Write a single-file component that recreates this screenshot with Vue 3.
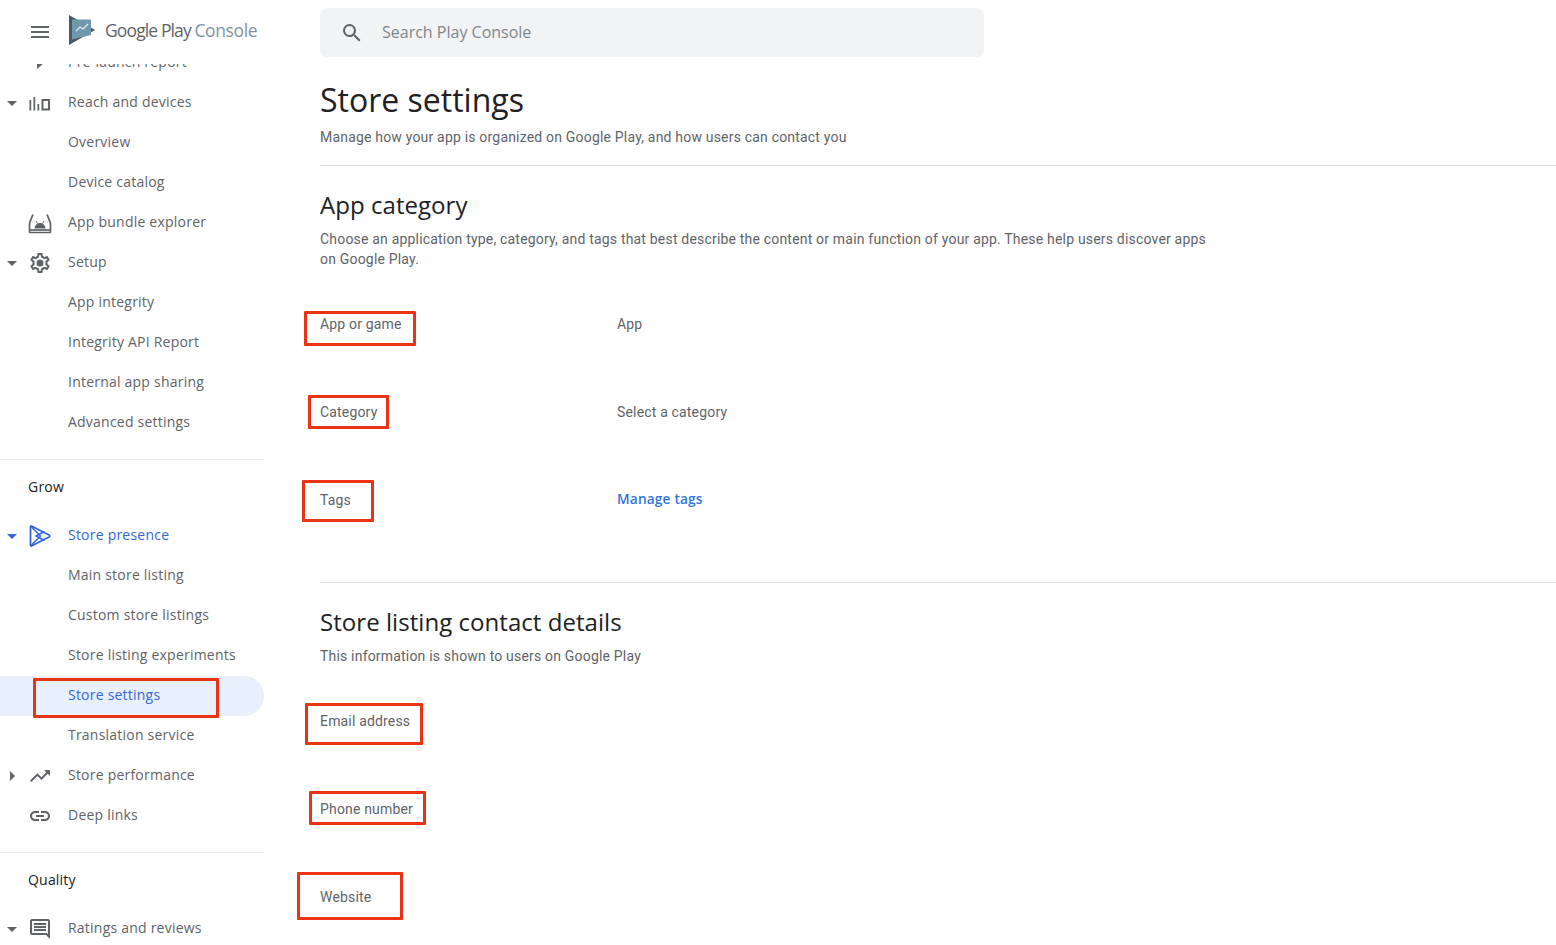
<script setup>
const groupA = [
  { label: 'Pre-launch report', icon: 'pre' },
  { label: 'Reach and devices', icon: 'reach', arrow: 'down' },
  { label: 'Overview' },
  { label: 'Device catalog' },
  { label: 'App bundle explorer', icon: 'bundle' },
  { label: 'Setup', icon: 'gear', arrow: 'down' },
  { label: 'App integrity' },
  { label: 'Integrity API Report' },
  { label: 'Internal app sharing' },
  { label: 'Advanced settings' },
]
const groupB = [
  { label: 'Store presence', icon: 'play', arrow: 'down', blue: true },
  { label: 'Main store listing' },
  { label: 'Custom store listings' },
  { label: 'Store listing experiments' },
  { label: 'Store settings', active: true, mark: true },
  { label: 'Translation service' },
  { label: 'Store performance', icon: 'trend', arrow: 'right' },
  { label: 'Deep links', icon: 'link' },
]
const groupC = [{ label: 'Ratings and reviews', icon: 'review', arrow: 'down' }]
const groups = [
  { items: groupA },
  { title: 'Grow', items: groupB },
  { title: 'Quality', items: groupC },
]
</script>

<template>
  <div class="page">
    <aside class="side">
      <header class="brand">
        <svg class="menu" width="24" height="24" viewBox="0 0 24 24"><path d="M3 18h18v-2H3zm0-5h18v-2H3zm0-7v2h18V6z" fill="#5f6368"/></svg>
        <svg class="logo" width="28" height="32" viewBox="0 0 28 32">
          <path d="M1 1l26 15L1 31z" fill="#455a64"/>
          <path d="M4 5.500h19v15.500L4 25.500z" fill="#6f98ab"/>
          <path d="M8 17l4-4 3 2 5-5" fill="none" stroke="#dfe9ed" stroke-width="1.300"/>
        </svg>
        <span class="wordmark">Google Play <em>Console</em></span>
      </header>
      <div class="scroller">
        <section v-for="(g, gi) in groups" :key="gi" class="group">
          <h3 v-if="g.title" class="group-title">{{ g.title }}</h3>
          <div
            v-for="item in g.items"
            :key="item.label"
            class="row"
            :class="{ blue: item.blue, active: item.active }"
          >
            <span class="arrow-slot">
              <i v-if="item.arrow" class="arrow" :class="item.arrow"></i>
            </span>
            <span class="icon-slot">
              <svg v-if="item.icon === 'pre'" width="24" height="24" viewBox="0 0 24 24"><path d="M9 6l7 6-7 6z" fill="#5f6368"/></svg>
              <svg v-else-if="item.icon === 'reach'" width="24" height="24" viewBox="0 0 24 24" fill="#5f6368"><path d="M1.500 9h1.700v10.500H1.500zM5.500 6h1.700v13.500H5.500zM9.500 13h1.700v6.500H9.500zM13.500 8H22v11.500h-8.500zm2 2v7.500H20V10z" fill-rule="evenodd"/></svg>
              <svg v-else-if="item.icon === 'bundle'" width="24" height="24" viewBox="0 0 24 24"><path d="M5 3.500C3.500 7 2 10 1.500 13v7.500a1 1 0 0 0 1 1h19a1 1 0 0 0 1-1V13C22 10 20.500 7 19 3.500" fill="none" stroke="#5f6368" stroke-width="1.700"/><path d="M2 19h20" stroke="#5f6368" stroke-width="1.700"/><path d="M6.500 17.500c0-3 2.400-5.500 5.500-5.500s5.500 2.500 5.500 5.500z" fill="#5f6368"/><path d="M8 10l1.500 2.500M16 10l-1.500 2.500" stroke="#5f6368" stroke-width="1"/></svg>
              <svg v-else-if="item.icon === 'gear'" width="24" height="24" viewBox="0 0 24 24" fill="#5f6368"><path d="M19.430 12.980c.04-.32.070-.64.070-.98s-.03-.66-.07-.98l2.110-1.650c.19-.15.240-.42.120-.64l-2-3.460c-.12-.22-.39-.3-.61-.22l-2.490 1c-.52-.4-1.080-.73-1.690-.98l-.38-2.650A.488.488 0 0 0 14 2h-4c-.25 0-.46.180-.49.420l-.38 2.650c-.61.250-1.170.590-1.690.98l-2.490-1a.566.566 0 0 0-.18-.03c-.17 0-.34.090-.43.250l-2 3.460c-.13.220-.07.490.12.640l2.110 1.650c-.04.320-.07.650-.07.980s.03.660.07.980l-2.110 1.650c-.19.150-.24.420-.12.640l2 3.460c.12.220.39.300.61.220l2.490-1c.52.400 1.080.730 1.690.980l.38 2.650c.03.240.24.420.49.420h4c.25 0 .46-.18.490-.42l.38-2.650c.61-.25 1.170-.59 1.690-.98l2.490 1c.06.020.12.030.18.030.17 0 .34-.09.43-.25l2-3.460c.12-.22.070-.49-.12-.64zm-1.980-1.710c.04.310.05.520.05.730s-.02.430-.05.730l-.14 1.130.89.700 1.080.840-.70 1.210-1.270-.51-1.040-.42-.9.680c-.43.320-.84.560-1.250.73l-1.060.43-.16 1.130-.2 1.350h-1.400l-.19-1.350-.16-1.130-1.060-.43c-.43-.18-.83-.41-1.230-.71l-.91-.70-1.060.43-1.270.51-.7-1.210 1.080-.84.890-.70-.14-1.130c-.03-.31-.05-.54-.05-.74s.02-.43.05-.73l.14-1.130-.89-.70-1.080-.84.700-1.210 1.270.51 1.040.42.900-.68c.43-.32.840-.56 1.250-.73l1.060-.43.160-1.130.2-1.350h1.390l.19 1.350.16 1.130 1.060.43c.43.180.83.410 1.230.71l.91.700 1.060-.43 1.270-.51.700 1.210-1.070.85-.89.700zM12 8.500a3.500 3.500 0 1 0 0 7 3.500 3.500 0 0 0 0-7z"/></svg>
              <svg v-else-if="item.icon === 'play'" width="24" height="24" viewBox="0 0 24 24"><path d="M3.500 2c-.6 0-1 .4-1 1v18c0 .6.400 1 1 1l17.500-9c.9-.5.900-1.500 0-2z" fill="none" stroke="#3367d6" stroke-width="1.800" stroke-linejoin="round"/><path d="M3 2.500L12.500 12 3 21.500M16.500 7.500L8 12l8.500 4.500" fill="none" stroke="#3367d6" stroke-width="1.500"/></svg>
              <svg v-else-if="item.icon === 'trend'" width="24" height="24" viewBox="0 0 24 24"><path d="M16 6l2.290 2.290-4.880 4.880-4-4L2 16.590 3.410 18l6-6 4 4 6.300-6.290L22 12V6z" fill="#5f6368"/></svg>
              <svg v-else-if="item.icon === 'link'" width="24" height="24" viewBox="0 0 24 24"><path d="M17 7h-4v2h4c1.650 0 3 1.350 3 3s-1.350 3-3 3h-4v2h4c2.760 0 5-2.240 5-5s-2.240-5-5-5zm-6 8H7c-1.650 0-3-1.350-3-3s1.350-3 3-3h4V7H7c-2.760 0-5 2.240-5 5s2.240 5 5 5h4v-2zm-3-4h8v2H8z" fill="#5f6368"/></svg>
              <svg v-else-if="item.icon === 'review'" width="24" height="24" viewBox="0 0 24 24"><path d="M21.990 4c0-1.100-.89-2-1.990-2H4c-1.100 0-2 .9-2 2v12c0 1.100.9 2 2 2h14l4 4zM20 4v13.170L18.830 16H4V4zM6 12h12v2H6zm0-3h12v2H6zm0-3h12v2H6z" fill="#5f6368"/></svg>
            </span>
            <span class="label">
              {{ item.label }}
              <b v-if="item.mark" class="mark mark-nav"></b>
            </span>
          </div>
        </section>
      </div>
    </aside>

    <main class="main">
      <div class="search">
        <svg width="24" height="24" viewBox="0 0 24 24"><path d="M15.500 14h-.79l-.28-.27A6.471 6.471 0 0 0 16 9.500 6.500 6.500 0 1 0 9.500 16c1.610 0 3.090-.59 4.230-1.570l.27.28v.79l5 4.990L20.490 19l-4.990-5zm-6 0C7.010 14 5 11.990 5 9.500S7.010 5 9.500 5 14 7.010 14 9.500 11.990 14 9.500 14z" fill="#5f6368"/></svg>
        <span class="search-text">Search Play Console</span>
      </div>

      <h1>Store settings</h1>
      <p class="lead">Manage how your app is organized on Google Play, and how users can contact you</p>

      <section class="block first">
        <h2>App category</h2>
        <p class="desc">Choose an application type, category, and tags that best describe the content or main function of your app. These help users discover apps on Google Play.</p>
        <div class="field f1">
          <span class="key">App or game<b class="mark m-app"></b></span>
          <span class="val">App</span>
        </div>
        <div class="field">
          <span class="key">Category<b class="mark m-cat"></b></span>
          <span class="val">Select a category</span>
        </div>
        <div class="field">
          <span class="key">Tags<b class="mark m-tags"></b></span>
          <a class="val link">Manage tags</a>
        </div>
      </section>

      <section class="block second">
        <h2>Store listing contact details</h2>
        <p class="desc">This information is shown to users on Google Play</p>
        <div class="field f2">
          <span class="key">Email address<b class="mark m-email"></b></span>
        </div>
        <div class="field">
          <span class="key">Phone number<b class="mark m-phone"></b></span>
        </div>
        <div class="field">
          <span class="key">Website<b class="mark m-web"></b></span>
        </div>
      </section>
    </main>
  </div>
</template>

<style scoped>
.page {
  display: flex;
  height: 945px;
  overflow: hidden;
  background: #fff;
  font-family: Roboto, "Liberation Sans", sans-serif;
  color: #5f6368;
}
.side {
  width: 264px;
  flex: none;
  display: flex;
  flex-direction: column;
  overflow: hidden;
}
.brand {
  height: 64px;
  flex: none;
  display: flex;
  align-items: center;
  padding: 3px 0 4px 28px;
  box-sizing: border-box;
  background: #fff;
  position: relative;
  z-index: 1;
}
.logo {
  margin-left: 16px;
  margin-top: -3px;
}
.wordmark {
  margin-left: 9px;
  margin-top: -3px;
  font-family: "Open Sans", sans-serif;
  font-size: 17.500px;
  letter-spacing: -0.88px;
  white-space: nowrap;
  color: #5f6368;
}
.wordmark em {
  font-style: normal;
  color: #80949f;
  letter-spacing: -0.4px;
}
.scroller {
  margin-top: -21px;
}
.group {
  padding-bottom: 16px;
  border-bottom: 1px solid #e8eaed;
}
.group:last-child {
  border-bottom: 0;
}
.group-title {
  margin: 0;
  height: 56px;
  padding: 17px 0 0 28px;
  box-sizing: border-box;
  font-family: "Open Sans", sans-serif;
  font-size: 14px;
  line-height: 20px;
  font-weight: 400;
  letter-spacing: 0.2px;
  color: #202124;
}
.row {
  height: 40px;
  display: flex;
  align-items: center;
  border-radius: 0 20px 20px 0;
  font-family: "Open Sans", sans-serif;
  font-size: 14px;
  letter-spacing: 0.22px;
  white-space: nowrap;
}
.row.blue {
  color: #3367d6;
}
.row.active {
  background: #e8f0fe;
  color: #3367d6;
}
.arrow-slot {
  width: 28px;
  flex: none;
  display: flex;
  justify-content: center;
  padding-right: 4px;
  box-sizing: border-box;
}
.arrow {
  display: block;
  width: 0;
  height: 0;
  border-style: solid;
  border-color: transparent;
}
.arrow.down {
  border-width: 5px 5px 0;
  border-top-color: currentColor;
}
.arrow.right {
  border-width: 5px 0 5px 5px;
  border-left-color: currentColor;
}
.icon-slot {
  width: 24px;
  height: 24px;
  flex: none;
  margin-right: 16px;
}
.icon-slot svg {
  display: block;
}
.label {
  position: relative;
  top: -2px;
}
.main {
  flex: 1;
  min-width: 0;
  padding: 8px 0 0 56px;
}
.search {
  width: 664px;
  height: 49px;
  display: flex;
  align-items: center;
  gap: 18px;
  padding-left: 20px;
  box-sizing: border-box;
  border-radius: 8px;
  background: #f1f3f4;
  font-family: "Open Sans", sans-serif;
  font-size: 16px;
  color: #80868b;
}
.search-text {
  margin-top: -2px;
}
h1 {
  margin: 22px 0 0;
  font-family: "Open Sans", sans-serif;
  font-size: 32px;
  line-height: 42px;
  font-weight: 400;
  color: #202124;
}
.lead {
  margin: 6px 0 0;
  font-size: 14px;
  line-height: 20px;
  letter-spacing: 0.19px;
}
.block {
  border-top: 1px solid #dadce0;
}
.first {
  margin-top: 18px;
  height: 416px;
}
h2 {
  margin: 0;
  font-family: "Open Sans", sans-serif;
  font-size: 24px;
  line-height: 30px;
  font-weight: 400;
  letter-spacing: 0.05px;
  color: #202124;
}
.block h2 {
  padding-top: 24px;
}
.desc {
  margin: 9px 0 0;
  width: 890px;
  font-size: 14px;
  line-height: 20px;
  letter-spacing: 0.19px;
}
.field {
  height: 88px;
  display: flex;
  font-size: 14px;
  line-height: 20px;
  letter-spacing: 0.17px;
}
.f1 {
  margin-top: 45px;
}
.f2 {
  margin-top: 45px;
}
.key {
  position: relative;
  width: 297px;
  height: 20px;
  flex: none;
}
.val {
  white-space: nowrap;
}
.link {
  margin-top: -1px;
  color: #2f76e0;
  font-family: "Open Sans", sans-serif;
  font-size: 13.700px;
  font-weight: 600;
}
.mark {
  position: absolute;
  box-sizing: border-box;
  border: 3px solid #ea3312;
  border-radius: 1px;
  pointer-events: none;
}
.mark-nav { left: -35px; top: -7px; width: 186px; height: 40px; }
.m-app { left: -16px; top: -3px; width: 112px; height: 35px; }
.m-cat { left: -12px; top: -7px; width: 81px; height: 34px; }
.m-tags { left: -18px; top: -10px; width: 72px; height: 42px; }
.m-email { left: -15px; top: -8px; width: 118px; height: 42px; }
.m-phone { left: -11px; top: -8px; width: 117px; height: 34px; }
.m-web { left: -23px; top: -15px; width: 106px; height: 48px; }
</style>
